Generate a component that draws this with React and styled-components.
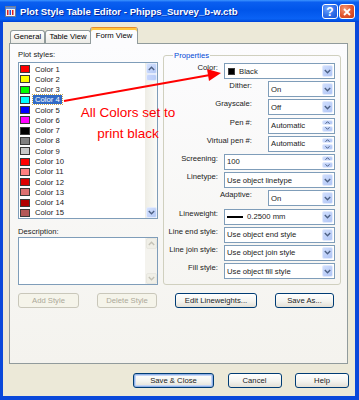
import React from 'react'
import styled, { createGlobalStyle } from 'styled-components'

const GlobalStyle = createGlobalStyle`
  html, body { margin: 0; padding: 0; background: #fff; }
  body { font-family: "Liberation Sans", Arial, sans-serif; }
  * { box-sizing: border-box; }
`

const UI_FONT = `7.7px "Liberation Sans", Arial, sans-serif`

const Window = styled.div`
  position: relative;
  width: 359px;
  height: 400px;
  display: flex;
  flex-direction: column;
  background: #0a48da;
  overflow: hidden;
`

const TitleBar = styled.div`
  flex: none;
  height: 22px;
  display: flex;
  align-items: center;
  padding: 1px 4px 0 5px;
  background: linear-gradient(180deg, #3d95ff 0%, #0b5ff0 10%, #0055ea 45%, #0a62f5 85%, #0050e0 95%, #003dd7 100%);
`

const AppIcon = styled.svg`
  flex: none;
  margin-right: 4px;
`

const Title = styled.div`
  flex: 1;
  color: #fff;
  font: bold 9.6px "Liberation Sans", Arial, sans-serif;
  text-shadow: 1px 1px 0 #0a2a9c;
  white-space: nowrap;
`

const CaptionButtons = styled.div`
  display: flex;
  gap: 1px;
`

const CaptionButton = styled.div`
  width: 16px;
  height: 15px;
  border: 1px solid #fff;
  border-radius: 3px;
  display: flex;
  align-items: center;
  justify-content: center;
  color: #fff;
  font: bold 12px "Liberation Sans", Arial, sans-serif;
  background: ${p => p.$close
    ? 'radial-gradient(circle at 35% 30%, #f39a78, #e0542d 55%, #c53a16)'
    : 'radial-gradient(circle at 35% 30%, #6fa6ff, #2f6ee8 55%, #1d52d4)'};
`

const Frame = styled.div`
  flex: 1;
  display: flex;
  padding: 0 4px 4px 3px;
`

const Client = styled.div`
  flex: 1;
  background: #ece9d8;
  display: flex;
  flex-direction: column;
`

const TabStrip = styled.div`
  flex: none;
  height: 21px;
  display: flex;
  align-items: flex-end;
  padding-left: 7px;
`

const Tab = styled.div`
  position: relative;
  z-index: ${p => (p.$active ? 1 : 0)};
  width: ${p => p.$w}px;
  height: ${p => (p.$active ? 17 : 13)}px;
  margin-left: ${p => (p.$active ? -1 : 0)}px;
  margin-bottom: ${p => (p.$active ? -1 : 0)}px;
  border: 1px solid #919b9c;
  border-bottom: none;
  border-top-color: ${p => (p.$active ? '#e68b2c' : '#919b9c')};
  border-radius: 3px 3px 0 0;
  background: ${p => (p.$active ? '#fcfcfe' : 'linear-gradient(180deg, #fff, #ecebe6)')};
  box-shadow: ${p => (p.$active ? 'inset 0 2px 0 #ffc73c' : 'none')};
  display: flex;
  justify-content: center;
  padding-top: ${p => (p.$active ? 3 : 1)}px;
  font: ${UI_FONT};
  line-height: 9px;
  color: #000;
`

const Panel = styled.div`
  flex: none;
  height: 321px;
  margin: 0 7px 0 6px;
  border: 1px solid #919b9c;
  background: linear-gradient(180deg, #fcfcfe, #f4f3ee);
  padding: 6px 0 0 8px;
  display: flex;
  flex-direction: column;
`

const Columns = styled.div`
  display: flex;
  gap: 5px;
`

const LeftCol = styled.div`
  width: 140px;
  display: flex;
  flex-direction: column;
`

const FieldLabel = styled.div`
  font: ${UI_FONT};
  line-height: 9px;
  height: 9px;
  color: #222;
  margin: ${p => p.$m || '0 0 3px'};
`

const Box = styled.div`
  height: ${p => p.$h}px;
  border: 1px solid #7f9db9;
  background: #fff;
  display: flex;
`

const Items = styled.div`
  flex: 1;
  padding-top: 1px;
  display: flex;
  flex-direction: column;
`

const Item = styled.div`
  height: 10.36px;
  display: flex;
  align-items: center;
  padding-left: 1px;
`

const Swatch = styled.span`
  width: ${p => p.$w || 10}px;
  height: ${p => p.$h || 8}px;
  border: 1px solid #3a3a3a;
  background: ${p => p.$c};
  flex: none;
`

const ItemText = styled.span`
  margin-left: 3px;
  padding: 0 2px;
  font: ${UI_FONT};
  line-height: 9px;
  color: ${p => (p.$sel ? '#fff' : '#222')};
  background: ${p => (p.$sel ? '#316ac5' : 'transparent')};
  outline: ${p => (p.$sel ? '1px dotted #c9a54a' : 'none')};
`

const ScrollBar = styled.div`
  width: 12px;
  flex: none;
  display: flex;
  flex-direction: column;
  background: ${p => (p.$disabled ? '#f4f3ee' : 'linear-gradient(90deg, #eeede5, #fbfbf8)')};
`

const ScrollBtn = styled.div`
  height: 11px;
  flex: none;
  margin: 0 0 0 1px;
  border: 1px solid ${p => (p.$disabled ? '#e8e7e0' : '#e4ecfd')};
  border-radius: 2px;
  background: ${p => (p.$disabled ? '#f0efe7' : 'linear-gradient(135deg, #d5e2fe, #b3c8f5)')};
  display: flex;
  align-items: center;
  justify-content: center;
`

const Thumb = styled.div`
  height: 7px;
  margin: 0 0 0 1px;
  border: 1px solid #e4ecfd;
  border-radius: 2px;
  background: linear-gradient(90deg, #c8d7fd, #b9cdf8);
`

const Track = styled.div`
  flex: 1;
`

const GroupBox = styled.fieldset`
  width: 178px;
  height: 235px;
  margin: 0;
  padding: 2px 5px 4px 4px;
  border: 1px solid #d0d0bf;
  border-radius: 3px;
  display: flex;
  flex-direction: column;
  gap: 2.2px;
`

const Legend = styled.legend`
  margin-left: 5px;
  padding: 0 1px;
  font: ${UI_FONT};
  line-height: 11px;
  color: #0046d5;
`

const PropRow = styled.div`
  height: 16px;
  display: flex;
  justify-content: flex-end;
  align-items: flex-start;
`

const PropLabel = styled.div`
  margin: 0 ${p => (p.$narrow ? 16 : 6)}px 0 0;
  font: ${UI_FONT};
  line-height: 9px;
  color: #222;
`

const Field = styled.div`
  width: ${p => (p.$narrow ? 67 : 111)}px;
  height: 16px;
  border: 1px solid #7f9db9;
  background: #fff;
  display: flex;
  align-items: stretch;
`

const Value = styled.div`
  flex: 1;
  display: flex;
  align-items: center;
  padding-left: 2px;
  font: ${UI_FONT};
  color: #222;
  white-space: nowrap;
`

const DropBtn = styled.div`
  width: 11px;
  margin: 1px;
  border: 1px solid #e2eafd;
  border-radius: 2px;
  background: linear-gradient(135deg, #d0defd, #b0c5f5);
  display: flex;
  align-items: center;
  justify-content: center;
`

const Spin = styled.div`
  width: 11px;
  margin: 1px;
  display: flex;
  flex-direction: column;
  gap: 1px;
`

const SpinHalf = styled(DropBtn)`
  flex: 1;
  width: auto;
  margin: 0;
`

const WeightLine = styled.span`
  width: 16px;
  height: 2px;
  background: #000;
  margin-right: 4px;
`

const ButtonRow = styled.div`
  display: flex;
  gap: ${p => p.$gap || 18}px;
  justify-content: ${p => p.$end ? 'flex-end' : 'flex-start'};
  margin: ${p => p.$m || '0'};
  padding: ${p => p.$pad || '0'};
`

const Button = styled.div`
  width: ${p => p.$w}px;
  height: 15px;
  border: 1px solid ${p => (p.$disabled ? '#c9c7ba' : '#003c74')};
  border-radius: 3px;
  background: ${p => (p.$disabled ? '#f5f4ea' : 'linear-gradient(180deg, #fff 0%, #f4f4f0 55%, #e3e0d6 100%)')};
  box-shadow: ${p => (p.$default ? 'inset 0 0 0 1px #8fb0e6, inset 0 0 0 2px #c4d6f6' : 'none')};
  color: ${p => (p.$disabled ? '#aca899' : '#222')};
  font: ${UI_FONT};
  display: flex;
  align-items: center;
  justify-content: center;
`

const Arrow = styled.svg`
  position: absolute;
  left: 0;
  top: 0;
  pointer-events: none;
`

const Callout = styled.div`
  position: absolute;
  left: 74px;
  top: 103px;
  width: 108px;
  text-align: center;
  color: #f00;
  font: 13.5px/20.5px "Liberation Sans", Arial, sans-serif;
  pointer-events: none;
`

const Chevron = ({ up, color = '#4d6185' }) => (
  <svg width="7" height="5" viewBox="0 0 7 5">
    <path d={up ? 'M0.8 4 L3.5 1.3 L6.2 4' : 'M0.8 1 L3.5 3.7 L6.2 1'} fill="none" stroke={color} strokeWidth="1.4" />
  </svg>
)

const SmallChevron = ({ up }) => (
  <svg width="5" height="3" viewBox="0 0 5 3">
    <path d={up ? 'M0.5 2.7 L2.5 0.7 L4.5 2.7' : 'M0.5 0.3 L2.5 2.3 L4.5 0.3'} fill="none" stroke="#4d6185" strokeWidth="1" />
  </svg>
)

const colors = [
  '#ff0000', '#ffff00', '#00ff00', '#00ffff', '#0000ff', '#ff00ff', '#000000', '#808080',
  '#c8c8c8', '#ff0000', '#ff7f7f', '#dd0000', '#dd7070', '#b00000', '#b35858',
]

const props = [
  { label: 'Color:', kind: 'color', value: 'Black' },
  { label: 'Dither:', narrow: true, kind: 'drop', value: 'On' },
  { label: 'Grayscale:', narrow: true, kind: 'drop', value: 'Off' },
  { label: 'Pen #:', narrow: true, kind: 'spin', value: 'Automatic' },
  { label: 'Virtual pen #:', narrow: true, kind: 'spin', value: 'Automatic' },
  { label: 'Screening:', kind: 'spin', value: '100' },
  { label: 'Linetype:', kind: 'drop', value: 'Use object linetype' },
  { label: 'Adaptive:', narrow: true, kind: 'drop', value: 'On' },
  { label: 'Lineweight:', kind: 'weight', value: '0.2500 mm' },
  { label: 'Line end style:', kind: 'drop', value: 'Use object end style' },
  { label: 'Line join style:', kind: 'drop', value: 'Use object join style' },
  { label: 'Fill style:', kind: 'drop', value: 'Use object fill style' },
]

function PropField({ p }) {
  return (
    <Field $narrow={p.narrow}>
      <Value>
        {p.kind === 'color' && <Swatch $c="#000" $w={7} $h={7} style={{ marginRight: 4, marginLeft: 1 }} />}
        {p.kind === 'weight' && <WeightLine />}
        {p.value}
      </Value>
      {p.kind === 'spin' ? (
        <Spin>
          <SpinHalf><SmallChevron up /></SpinHalf>
          <SpinHalf><SmallChevron /></SpinHalf>
        </Spin>
      ) : (
        <DropBtn><Chevron /></DropBtn>
      )}
    </Field>
  )
}

export default function App() {
  return (
    <Window>
      <GlobalStyle />
      <TitleBar>
        <AppIcon width="11" height="11" viewBox="0 0 11 11">
          <rect x="0.5" y="0.5" width="10" height="10" fill="#f4f4f4" stroke="#6b7a99" />
          <rect x="1" y="1" width="9" height="2" fill="#5a8de0" />
          <rect x="2" y="4" width="1.5" height="5" fill="#e02020" />
          <rect x="4.5" y="4" width="1.5" height="5" fill="#2050e0" />
          <rect x="7" y="4" width="1.5" height="5" fill="#e02020" />
        </AppIcon>
        <Title>Plot Style Table Editor - Phipps_Survey_b-w.ctb</Title>
        <CaptionButtons>
          <CaptionButton>?</CaptionButton>
          <CaptionButton $close>
            <svg width="8" height="8" viewBox="0 0 8 8">
              <path d="M1 1 L7 7 M7 1 L1 7" stroke="#fff" strokeWidth="1.8" />
            </svg>
          </CaptionButton>
        </CaptionButtons>
      </TitleBar>
      <Frame>
        <Client>
          <TabStrip>
            <Tab $w={35}>General</Tab>
            <Tab $w={46}>Table View</Tab>
            <Tab $w={48} $active>Form View</Tab>
          </TabStrip>
          <Panel>
            <Columns>
              <LeftCol>
                <FieldLabel>Plot styles:</FieldLabel>
                <Box $h={157}>
                  <Items>
                    {colors.map((c, i) => (
                      <Item key={i}>
                        <Swatch $c={c} />
                        <ItemText $sel={i === 3}>Color {i + 1}</ItemText>
                      </Item>
                    ))}
                  </Items>
                  <ScrollBar>
                    <ScrollBtn><Chevron up /></ScrollBtn>
                    <Thumb />
                    <Track />
                    <ScrollBtn><Chevron /></ScrollBtn>
                  </ScrollBar>
                </Box>
                <FieldLabel $m="8px 0 1px">Description:</FieldLabel>
                <Box $h={48} style={{ justifyContent: 'flex-end' }}>
                  <ScrollBar $disabled>
                    <ScrollBtn $disabled><Chevron up color="#c4c2b6" /></ScrollBtn>
                    <Track />
                    <ScrollBtn $disabled><Chevron color="#c4c2b6" /></ScrollBtn>
                  </ScrollBar>
                </Box>
              </LeftCol>
              <GroupBox>
                <Legend>Properties</Legend>
                {props.map(p => (
                  <PropRow key={p.label}>
                    <PropLabel $narrow={p.narrow}>{p.label}</PropLabel>
                    <PropField p={p} />
                  </PropRow>
                ))}
              </GroupBox>
            </Columns>
            <ButtonRow $m="8px 0 0">
              <Button $w={61} $disabled>Add Style</Button>
              <Button $w={60} $disabled>Delete Style</Button>
              <Button $w={82}>Edit Lineweights...</Button>
              <Button $w={59}>Save As...</Button>
            </ButtonRow>
          </Panel>
          <ButtonRow $end $gap={13.5} $m="9px 0 0" $pad="0 6px 0 0">
            <Button $w={81} $default>Save &amp; Close</Button>
            <Button $w={54}>Cancel</Button>
            <Button $w={54}>Help</Button>
          </ButtonRow>
        </Client>
      </Frame>
      <Arrow width="359" height="400" viewBox="0 0 359 400">
        <line x1="64" y1="101" x2="210" y2="75" stroke="#f00" strokeWidth="2" />
        <polygon points="221,73 207,69 209,81" fill="#f00" />
      </Arrow>
      <Callout>All Colors set to<br />print black</Callout>
    </Window>
  )
}
